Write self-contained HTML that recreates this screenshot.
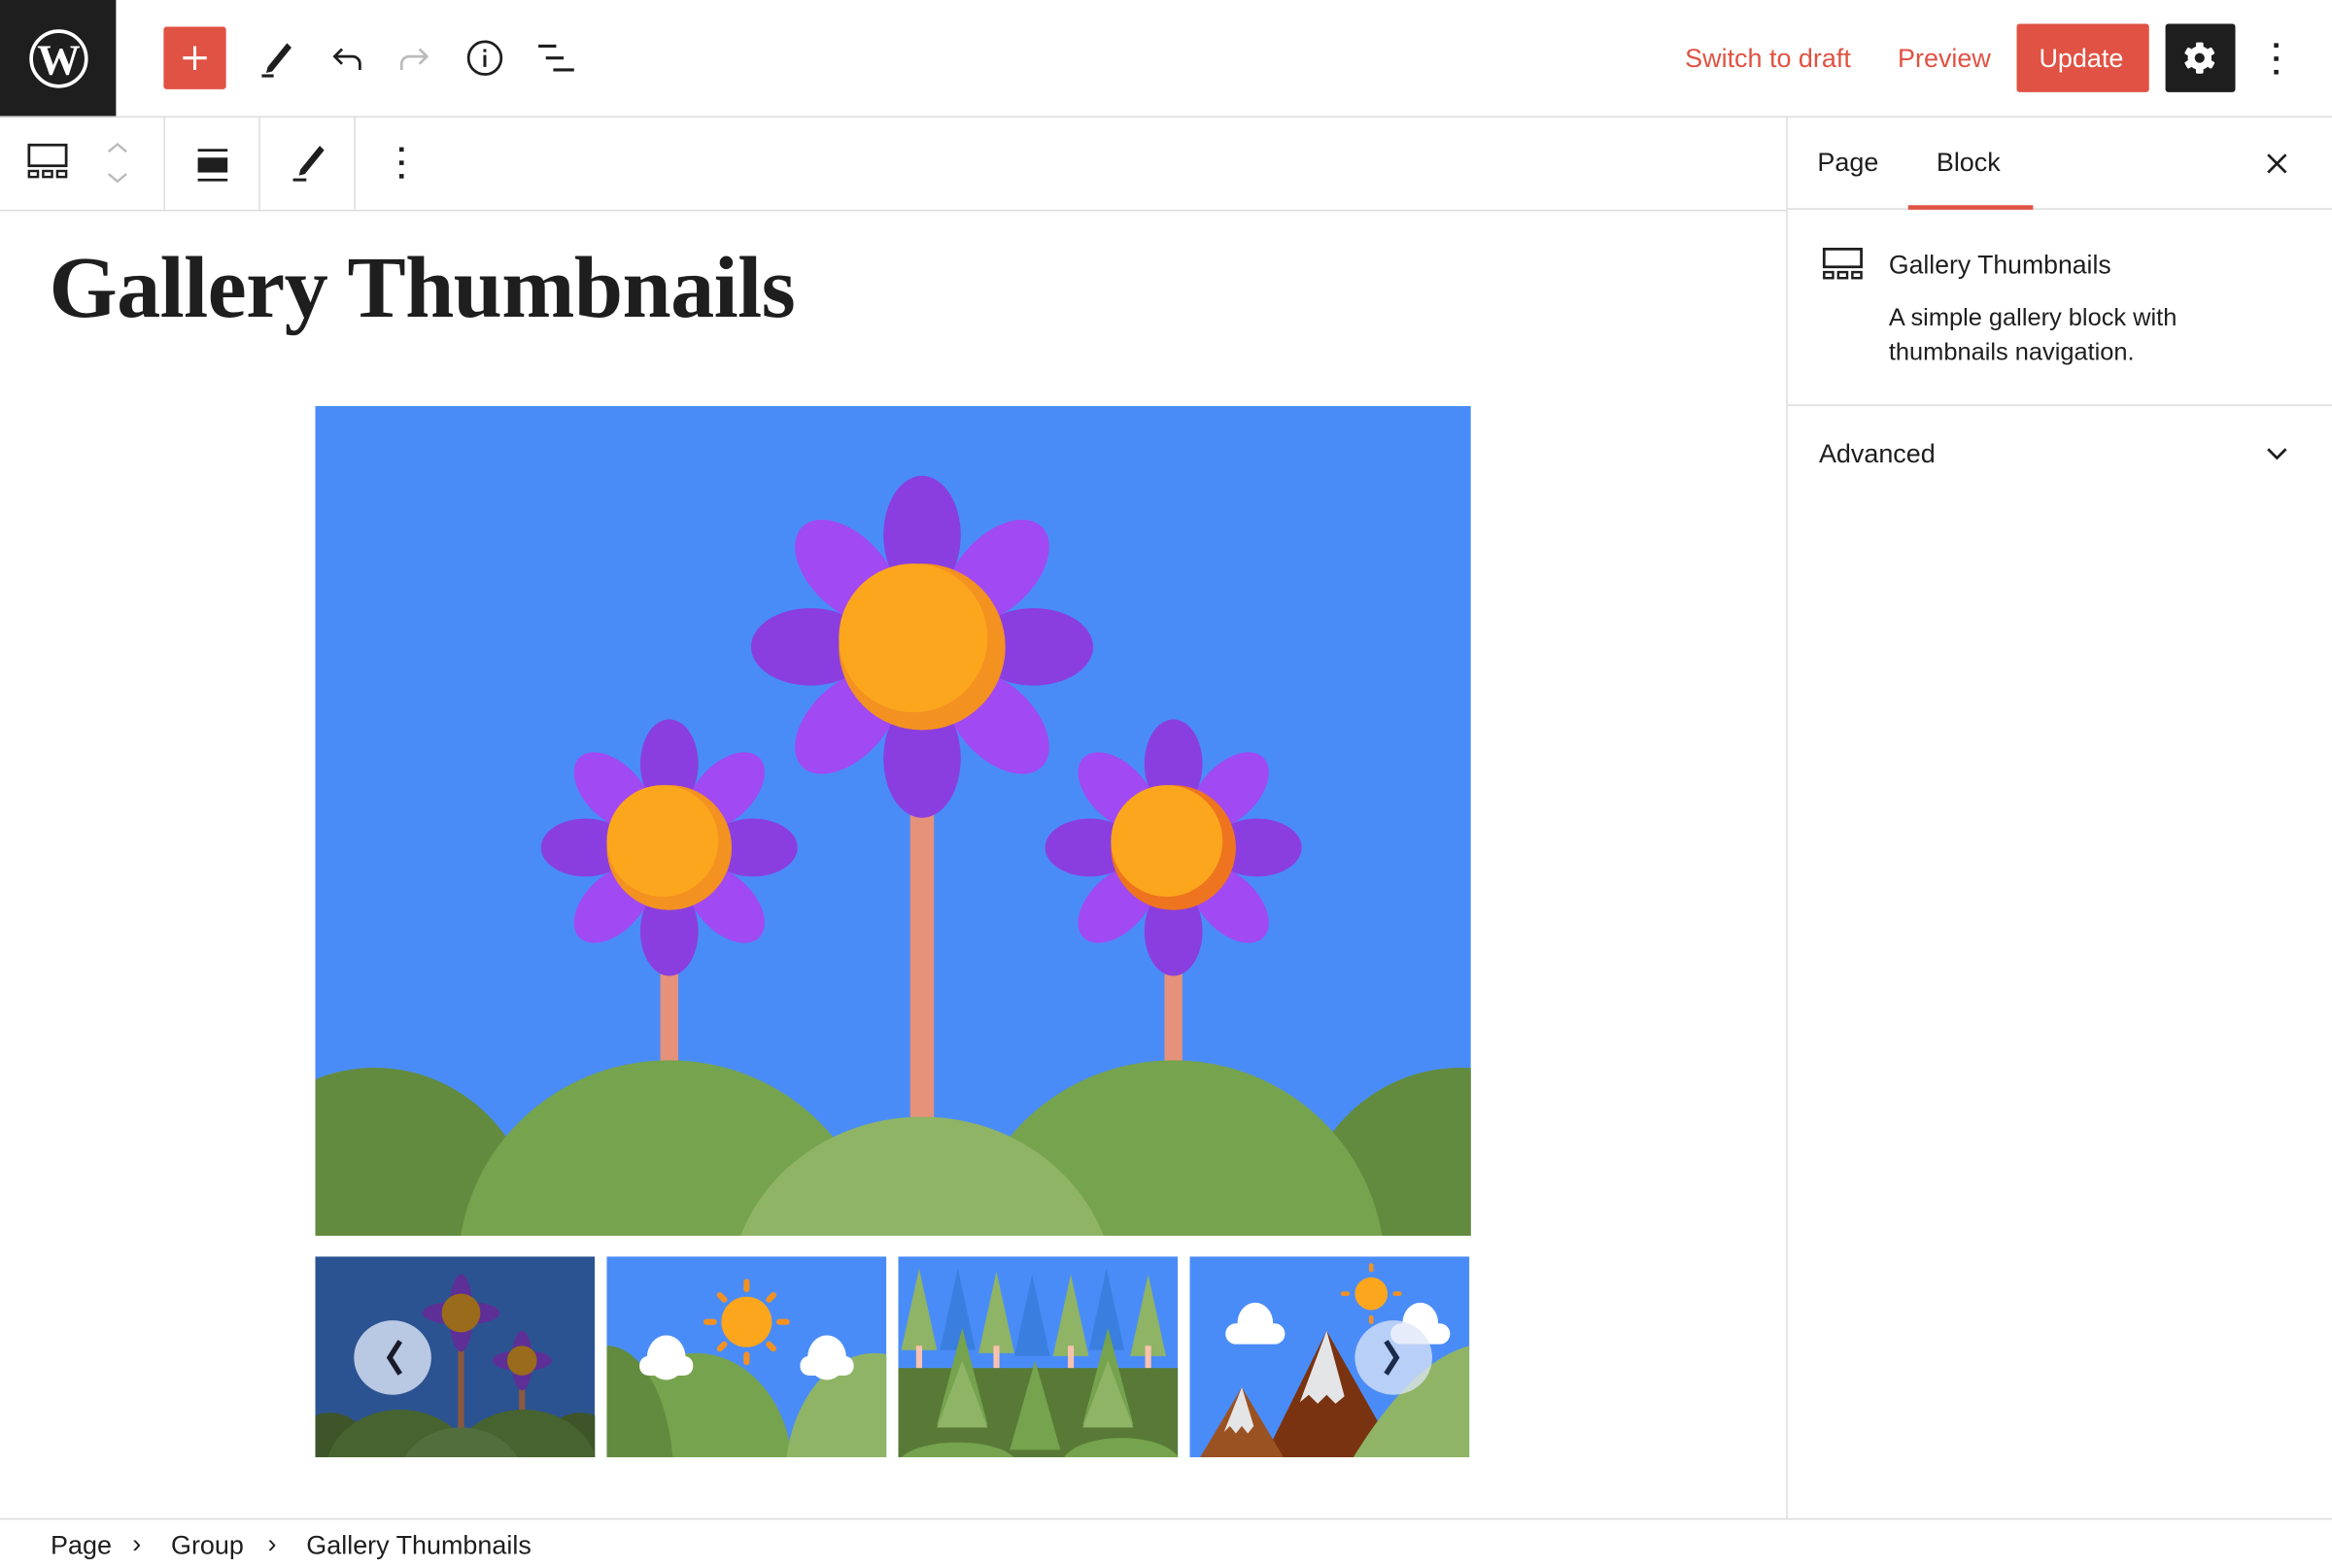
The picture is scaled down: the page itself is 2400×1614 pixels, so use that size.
<!DOCTYPE html>
<html><head><meta charset="utf-8">
<style>
html,body{margin:0;padding:0;background:#fff;overflow:hidden;width:2400px;height:1614px}
#w{position:absolute;left:0;top:0;width:1568px;height:1054px;transform:scale(1.530612);transform-origin:0 0;font-family:"Liberation Sans",sans-serif;color:#1e1e1e}
.a{position:absolute}
.t{position:absolute;white-space:nowrap;line-height:1}
</style></head><body><div id="w">
<div class="a" style="left:0;top:0;width:78px;height:79px;background:#1e1e1e"></div>
<svg class="a" style="left:19px;top:19px" width="41" height="41" viewBox="0 0 41 41"><circle cx="20.5" cy="20.5" r="18.5" fill="none" stroke="#fff" stroke-width="2.4"/><text x="20.5" y="31" text-anchor="middle" font-family="Liberation Serif" font-weight="bold" font-size="29" fill="#fff">W</text></svg>
<div class="a" style="left:0;top:78px;width:1568px;height:1px;background:#ddd"></div>
<div class="a" style="left:110px;top:18px;width:42px;height:42px;background:#e05243;border-radius:2px"></div>
<svg class="a" style="left:110px;top:18px" width="42" height="42"><path d="M21 13v16M13 21h16" stroke="#fff" stroke-width="2"/></svg>
<svg class="a" style="left:172px;top:27px" width="26" height="26" viewBox="0 0 26 26"><path d="M21 2l3 3-13 16-4 1 1-4z" fill="#1e1e1e"/><path d="M4 24h8" stroke="#1e1e1e" stroke-width="2"/></svg>
<svg class="a" style="left:220px;top:27px" width="26" height="26"><path d="M6 11h11a5 5 0 0 1 5 5v4M10 6l-5 5 5 5" fill="none" stroke="#1e1e1e" stroke-width="1.8"/></svg>
<svg class="a" style="left:266px;top:27px" width="26" height="26"><path d="M20 11H9a5 5 0 0 0-5 5v4M16 6l5 5-5 5" fill="none" stroke="#bbb" stroke-width="1.8"/></svg>
<svg class="a" style="left:313px;top:26px" width="26" height="26"><circle cx="13" cy="13" r="11" fill="none" stroke="#1e1e1e" stroke-width="1.8"/><path d="M13 11v8M13 7v2" stroke="#1e1e1e" stroke-width="2"/></svg>
<svg class="a" style="left:360px;top:27px" width="28" height="26"><path d="M2 4h12M7 12h12M12 20h14" stroke="#1e1e1e" stroke-width="2"/></svg>
<div class="t" style="left:1133px;top:31px;font-size:17.6px;color:#e05243">Switch to draft</div>
<div class="t" style="left:1276px;top:31px;font-size:17.6px;color:#e05243">Preview</div>
<div class="a" style="left:1356px;top:16px;width:89px;height:46px;background:#e05243;border-radius:2px"></div>
<div class="t" style="left:1371px;top:31px;font-size:17.6px;color:#fff">Update</div>
<div class="a" style="left:1456px;top:16px;width:47px;height:46px;background:#1e1e1e;border-radius:2px"></div>
<svg class="a" style="left:1466px;top:26px" width="26" height="26" viewBox="0 0 26 26"><g fill="#fff"><circle cx="13" cy="13" r="8"/><rect x="10.5" y="2.5" width="5" height="21" rx="1"/><rect x="10.5" y="2.5" width="5" height="21" rx="1" transform="rotate(60 13 13)"/><rect x="10.5" y="2.5" width="5" height="21" rx="1" transform="rotate(120 13 13)"/></g><circle cx="13" cy="13" r="3.3" fill="#1e1e1e"/></svg>
<svg class="a" style="left:1527px;top:28px" width="8" height="24"><g fill="#1e1e1e"><rect x="2" y="1" width="3" height="3"/><rect x="2" y="10" width="3" height="3"/><rect x="2" y="19" width="3" height="3"/></g></svg>
<div class="a" style="left:0;top:141px;width:1201px;height:1px;background:#ddd"></div>
<div class="a" style="left:110px;top:79px;width:1px;height:62px;background:#ddd"></div>
<div class="a" style="left:174px;top:79px;width:1px;height:62px;background:#ddd"></div>
<div class="a" style="left:238px;top:79px;width:1px;height:62px;background:#ddd"></div>
<svg class="a" style="left:18px;top:96px" width="28" height="26"><rect x="1.5" y="1.5" width="25" height="14" fill="none" stroke="#1e1e1e" stroke-width="1.8"/><g fill="none" stroke="#1e1e1e" stroke-width="1.6"><rect x="1.5" y="19" width="6" height="4"/><rect x="11" y="19" width="6" height="4"/><rect x="20.5" y="19" width="6" height="4"/></g></svg>
<svg class="a" style="left:70px;top:93px" width="18" height="34"><path d="M3 9l6-5 6 5M3 24l6 5 6-5" fill="none" stroke="#bbb" stroke-width="1.6"/></svg>
<svg class="a" style="left:132px;top:99px" width="22" height="24"><path d="M1 2h20M1 22h20" stroke="#1e1e1e" stroke-width="1.8"/><rect x="1" y="7" width="20" height="10" fill="#1e1e1e"/></svg>
<svg class="a" style="left:194px;top:96px" width="26" height="26" viewBox="0 0 26 26"><path d="M21 2l3 3-13 16-4 1 1-4z" fill="#1e1e1e"/><path d="M3 25h9" stroke="#1e1e1e" stroke-width="2"/></svg>
<svg class="a" style="left:266px;top:98px" width="8" height="24"><g fill="#1e1e1e"><rect x="2.5" y="1" width="3" height="3"/><rect x="2.5" y="10" width="3" height="3"/><rect x="2.5" y="19" width="3" height="3"/></g></svg>
<div class="a" style="left:1201px;top:79px;width:1px;height:943px;background:#ddd"></div>
<div class="t" style="left:1222px;top:101px;font-size:17.6px">Page</div>
<div class="t" style="left:1302px;top:101px;font-size:17.6px">Block</div>
<div class="a" style="left:1202px;top:140px;width:366px;height:1px;background:#ddd"></div>
<div class="a" style="left:1283px;top:138px;width:84px;height:3px;background:#e05243"></div>
<svg class="a" style="left:1523px;top:102px" width="16" height="16"><path d="M2 2l12 12M14 2L2 14" stroke="#1e1e1e" stroke-width="1.8"/></svg>
<svg class="a" style="left:1225px;top:166px" width="28" height="24"><rect x="1.5" y="1.5" width="25" height="12" fill="none" stroke="#1e1e1e" stroke-width="1.8"/><g fill="none" stroke="#1e1e1e" stroke-width="1.6"><rect x="1.5" y="17" width="6" height="4"/><rect x="11" y="17" width="6" height="4"/><rect x="20.5" y="17" width="6" height="4"/></g></svg>
<div class="t" style="left:1270px;top:170px;font-size:17.4px">Gallery Thumbnails</div>
<div class="t" style="left:1270px;top:202px;font-size:16.6px;line-height:23px">A simple gallery block with<br>thumbnails navigation.</div>
<div class="a" style="left:1202px;top:272px;width:366px;height:1px;background:#ddd"></div>
<div class="t" style="left:1223px;top:297px;font-size:17.6px">Advanced</div>
<svg class="a" style="left:1523px;top:299px" width="16" height="12"><path d="M2 3l6 6 6-6" fill="none" stroke="#1e1e1e" stroke-width="1.8"/></svg>
<div class="t" style="left:33px;top:164px;font-family:'Liberation Serif',serif;font-weight:bold;font-size:59px;letter-spacing:-0.4px">Gallery Thumbnails</div>
<svg class="a" style="left:212px;top:273px" width="777" height="558" viewBox="0 0 777 558">
<defs><clipPath id="c"><rect width="777" height="558"/></clipPath></defs>
<g clip-path="url(#c)">
<rect width="777" height="558" fill="#4a8cf7"/>
<rect x="400" y="160" width="16" height="330" fill="#e6917a"/>
<rect x="232" y="300" width="12" height="160" fill="#e6917a"/>
<rect x="571" y="300" width="12" height="160" fill="#e6917a"/>
<ellipse cx="40" cy="560" rx="110" ry="115" fill="#638b3f"/>
<ellipse cx="770" cy="560" rx="110" ry="115" fill="#638b3f"/>
<ellipse cx="238" cy="580" rx="142" ry="140" fill="#76a34d"/>
<ellipse cx="577" cy="580" rx="142" ry="140" fill="#76a34d"/>
<ellipse cx="408" cy="600" rx="130" ry="122" fill="#8fb466"/>
<g transform="translate(408,162)">
<g fill="#8a3ee0"><ellipse cx="0" cy="-75" rx="26" ry="40"/><ellipse cx="0" cy="75" rx="26" ry="40"/><ellipse cx="-75" cy="0" rx="40" ry="26"/><ellipse cx="75" cy="0" rx="40" ry="26"/></g>
<g fill="#a149f2"><ellipse cx="0" cy="-72" rx="25" ry="42" transform="rotate(45)"/><ellipse cx="0" cy="72" rx="25" ry="42" transform="rotate(45)"/><ellipse cx="0" cy="-72" rx="25" ry="42" transform="rotate(-45)"/><ellipse cx="0" cy="72" rx="25" ry="42" transform="rotate(-45)"/></g>
<circle r="56" fill="#f39121"/><circle cx="-6" cy="-6" r="50" fill="#fca61d"/>
</g>
<g transform="translate(238,297) scale(0.75)">
<g fill="#8a3ee0"><ellipse cx="0" cy="-75" rx="26" ry="40"/><ellipse cx="0" cy="75" rx="26" ry="40"/><ellipse cx="-75" cy="0" rx="40" ry="26"/><ellipse cx="75" cy="0" rx="40" ry="26"/></g>
<g fill="#a149f2"><ellipse cx="0" cy="-72" rx="25" ry="42" transform="rotate(45)"/><ellipse cx="0" cy="72" rx="25" ry="42" transform="rotate(45)"/><ellipse cx="0" cy="-72" rx="25" ry="42" transform="rotate(-45)"/><ellipse cx="0" cy="72" rx="25" ry="42" transform="rotate(-45)"/></g>
<circle r="56" fill="#f39121"/><circle cx="-6" cy="-6" r="50" fill="#fca61d"/>
</g>
<g transform="translate(577,297) scale(0.75)">
<g fill="#8a3ee0"><ellipse cx="0" cy="-75" rx="26" ry="40"/><ellipse cx="0" cy="75" rx="26" ry="40"/><ellipse cx="-75" cy="0" rx="40" ry="26"/><ellipse cx="75" cy="0" rx="40" ry="26"/></g>
<g fill="#a149f2"><ellipse cx="0" cy="-72" rx="25" ry="42" transform="rotate(45)"/><ellipse cx="0" cy="72" rx="25" ry="42" transform="rotate(45)"/><ellipse cx="0" cy="-72" rx="25" ry="42" transform="rotate(-45)"/><ellipse cx="0" cy="72" rx="25" ry="42" transform="rotate(-45)"/></g>
<circle r="56" fill="#ee741f"/><circle cx="-6" cy="-6" r="50" fill="#fca61d"/>
</g>
</g></svg>
<svg class="a" style="left:212px;top:845px" width="188" height="135" viewBox="0 0 188 135">
<rect width="188" height="135" fill="#2c5391"/>
<rect x="96" y="40" width="4" height="95" fill="#8b5a3c"/><rect x="137" y="70" width="4" height="65" fill="#8b5a3c"/>
<g fill="#5e2f96"><ellipse cx="98" cy="38" rx="26" ry="8"/><ellipse cx="98" cy="38" rx="8" ry="26"/><ellipse cx="139" cy="70" rx="20" ry="7"/><ellipse cx="139" cy="70" rx="7" ry="20"/></g>
<circle cx="98" cy="38" r="13" fill="#9a6b1a"/><circle cx="139" cy="70" r="10" fill="#9a6b1a"/>
<ellipse cx="10" cy="140" rx="30" ry="35" fill="#3d5529"/><ellipse cx="178" cy="140" rx="30" ry="35" fill="#3d5529"/>
<ellipse cx="57" cy="145" rx="50" ry="42" fill="#47632f"/><ellipse cx="140" cy="145" rx="50" ry="42" fill="#47632f"/>
<ellipse cx="98" cy="150" rx="42" ry="35" fill="#536e3d"/>
<ellipse cx="52" cy="68" rx="26" ry="25" fill="#dde6f7" opacity="0.8"/>
<path d="M57 57l-7 11 7 11" fill="none" stroke="#1a1a2a" stroke-width="3.5"/>
</svg>
<svg class="a" style="left:408px;top:845px" width="188" height="135" viewBox="0 0 188 135">
<rect width="188" height="135" fill="#4a8cf7"/>
<ellipse cx="60" cy="145" rx="65" ry="80" fill="#76a34d"/><ellipse cx="0" cy="150" rx="45" ry="90" fill="#638b3f"/><ellipse cx="180" cy="150" rx="60" ry="85" fill="#8fb466"/>
<circle cx="94" cy="44" r="17" fill="#fca61d"/>
<g stroke="#f39121" stroke-width="4" stroke-linecap="round"><path d="M94 17v5M94 66v5M67 44h5M116 44h5M76 26l3 3M109 59l3 3M112 26l-3 3M79 59l-3 3"/></g>
<g fill="#fff"><ellipse cx="40" cy="68" rx="13" ry="15"/><rect x="22" y="67" width="36" height="13" rx="6"/><ellipse cx="148" cy="68" rx="13" ry="15"/><rect x="130" y="67" width="36" height="13" rx="6"/></g>
</svg>
<svg class="a" style="left:604px;top:845px" width="188" height="135" viewBox="0 0 188 135">
<rect width="188" height="135" fill="#4a8cf7"/>
<g fill="#3a7fe0"><path d="M40 8l-12 55h24zM90 12l-12 55h24zM140 8l-12 55h24z"/></g>
<g fill="#8fb466"><path d="M14 8l-12 55h24zM66 10l-12 55h24zM116 12l-12 55h24zM168 12l-12 55h24z"/></g>
<g fill="#f9c2ae"><rect x="12" y="60" width="4" height="20"/><rect x="64" y="60" width="4" height="20"/><rect x="114" y="60" width="4" height="20"/><rect x="166" y="60" width="4" height="20"/></g>
<rect y="75" width="188" height="60" fill="#587a36"/>
<g fill="#76a34d"><path d="M43 48l-17 65h34zM141 48l-17 65h34zM92 70l-17 60h34z"/></g>
<g fill="#8fb466"><path d="M43 70l-17 45h34zM141 70l-17 45h34z"/></g>
<ellipse cx="40" cy="140" rx="40" ry="15" fill="#76a34d"/><ellipse cx="150" cy="140" rx="40" ry="18" fill="#76a34d"/>
</svg>
<svg class="a" style="left:800px;top:845px" width="188" height="135" viewBox="0 0 188 135">
<rect width="188" height="135" fill="#4a8cf7"/>
<circle cx="122" cy="25" r="11" fill="#fca61d"/>
<g stroke="#f39121" stroke-width="3" stroke-linecap="round"><path d="M122 6v3M122 41v3M103 25h3M138 25h3"/></g>
<g fill="#fff"><ellipse cx="44" cy="45" rx="12" ry="14"/><rect x="24" y="45" width="40" height="14" rx="7"/><ellipse cx="155" cy="45" rx="12" ry="14"/><rect x="135" y="45" width="40" height="14" rx="7"/></g>
<path d="M92 50l-42 85h90z" fill="#7a3310"/><path d="M92 50l-18 48 6-5 6 6 6-6 6 6 6-5z" fill="#e4e5e7"/>
<path d="M35 88l-28 47h56z" fill="#9a5222"/><path d="M35 88l-12 30 4-4 4 5 4-5 4 5 4-5z" fill="#e4e5e7"/>
<path d="M110 135q40-65 78-75v75z" fill="#8fb466"/>
<ellipse cx="137" cy="68" rx="26" ry="25" fill="#dde6f7" opacity="0.75"/>
<path d="M132 57l7 11-7 11" fill="none" stroke="#1a2a4a" stroke-width="3.5"/>
</svg>
<div class="a" style="left:0;top:1021px;width:1568px;height:1px;background:#ddd"></div>
<div class="t" style="left:34px;top:1031px;font-size:17.6px">Page</div>
<div class="t" style="left:89px;top:1030px;font-size:17.6px">›</div>
<div class="t" style="left:115px;top:1031px;font-size:17.6px">Group</div>
<div class="t" style="left:180px;top:1030px;font-size:17.6px">›</div>
<div class="t" style="left:206px;top:1031px;font-size:17.6px">Gallery Thumbnails</div>
</div></body></html>
